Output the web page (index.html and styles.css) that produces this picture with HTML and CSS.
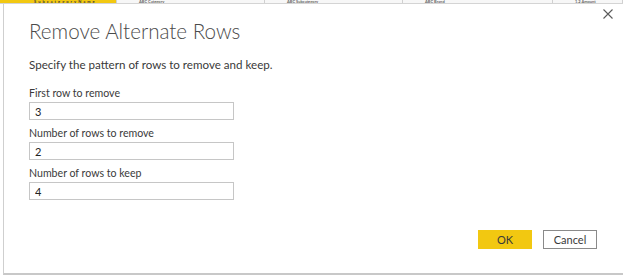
FILE: index.html
```html
<!DOCTYPE html>
<html lang="en">
<head>
  <meta charset="UTF-8" />
  <title>Remove Alternate Rows</title>
  <link rel="stylesheet" href="styles.css">
</head>
<body>

  <!-- table header peeking out behind the dialog -->
  <div class="behind">
    <div class="col col-active"><span>SubcategoryName</span></div>
    <div class="col col-a"><span>ABC Category</span></div>
    <div class="col col-b"><span>ABC Subcategory</span></div>
    <div class="col col-c"><span>ABC Brand</span></div>
    <div class="col col-d"><span>1.2 Amount</span></div>
  </div>

  <div class="dialog">
    <div class="dialog-head">
      <h1>Remove Alternate Rows</h1>
      <button class="close" aria-label="Close">
        <svg width="10" height="10" viewBox="0 0 10 10">
          <path d="M0.5 0.5 L9.5 9.5 M9.5 0.5 L0.5 9.5" stroke="#5a5a5a" stroke-width="1.1" fill="none"/>
        </svg>
      </button>
    </div>

    <p class="intro">Specify the pattern of rows to remove and keep.</p>

    <div class="field">
      <label for="firstRow">First row to remove</label>
      <input id="firstRow" type="text" value="3" />
    </div>
    <div class="field">
      <label for="removeCount">Number of rows to remove</label>
      <input id="removeCount" type="text" value="2" />
    </div>
    <div class="field">
      <label for="keepCount">Number of rows to keep</label>
      <input id="keepCount" type="text" value="4" />
    </div>

    <div class="actions">
      <button class="btn btn-ok">OK</button>
      <button class="btn btn-cancel">Cancel</button>
    </div>
  </div>

</body>
</html>
```

FILE: styles.css
```css
* {
  margin: 0;
  padding: 0;
  box-sizing: border-box;
}

body {
  width: 623px;
  height: 276px;
  overflow: hidden;
  background: #ffffff;
  font-family: 'Lato', 'Open Sans', sans-serif;
  color: #333333;
}

/* Background grid header, only a sliver shows */
.behind {
  display: flex;
  height: 4px;
  overflow: hidden;
  border-bottom: 1px solid #d4d4d4;
  background: #f7f7f7;
}

.col {
  height: 4px;
  border-right: 1px solid #d0d0d0;
  font-size: 4px;
  line-height: 3px;
  font-weight: 700;
  color: #666;
}

.col span {
  display: block;
  padding-left: 22px;
  white-space: nowrap;
}

.col-active {
  width: 117px;
  background: #f2c811;
  color: #3a3a3a;
}

.col-active span { padding-left: 34px; letter-spacing: 2px; }

.col-a { width: 148px; }
.col-b { width: 138px; }
.col-c { width: 150px; }
.col-d { flex: 1; }

/* Dialog */
.dialog {
  height: 271px;
  margin-left: 3px;
  border-left: 1px solid #cfcfcf;
  border-bottom: 2px solid #c8c8c8;
  padding: 0 26px 0 25px;
  background: #ffffff;
  display: flex;
  flex-direction: column;
}

.dialog-head {
  display: flex;
  justify-content: space-between;
  align-items: flex-start;
}

.dialog-head h1 {
  margin-top: 14px;
  font-size: 20.6px;
  line-height: 26px;
  font-weight: 300;
  color: #4a4a4a;
}

.close {
  margin-top: 4px;
  margin-right: -17px;
  width: 12px;
  height: 12px;
  border: none;
  background: none;
  display: flex;
  align-items: center;
  justify-content: center;
}

.intro {
  margin-top: 12px;
  font-size: 11.6px;
  line-height: 18px;
  color: #3a3a3a;
}

.field {
  display: flex;
  flex-direction: column;
  margin-top: 11px;
}

.field + .field {
  margin-top: 5px;
}

.field label {
  font-size: 10.6px;
  line-height: 16px;
  color: #3a3a3a;
}

.field input {
  width: 205px;
  height: 18px;
  margin-top: 1px;
  border: 1px solid #c6c6c6;
  padding: 0 5px;
  font-family: inherit;
  font-size: 11px;
  color: #222222;
  outline: none;
}

.actions {
  display: flex;
  justify-content: flex-end;
  gap: 11px;
  margin-top: 30px;
}

.btn {
  width: 54px;
  height: 19px;
  font-family: inherit;
  font-size: 11px;
  color: #3a3a3a;
  cursor: pointer;
}

.btn-ok {
  background: #f2c811;
  border: 1px solid #f2c811;
}

.btn-cancel {
  background: #ffffff;
  border: 1px solid #8a8a8a;
}
```
